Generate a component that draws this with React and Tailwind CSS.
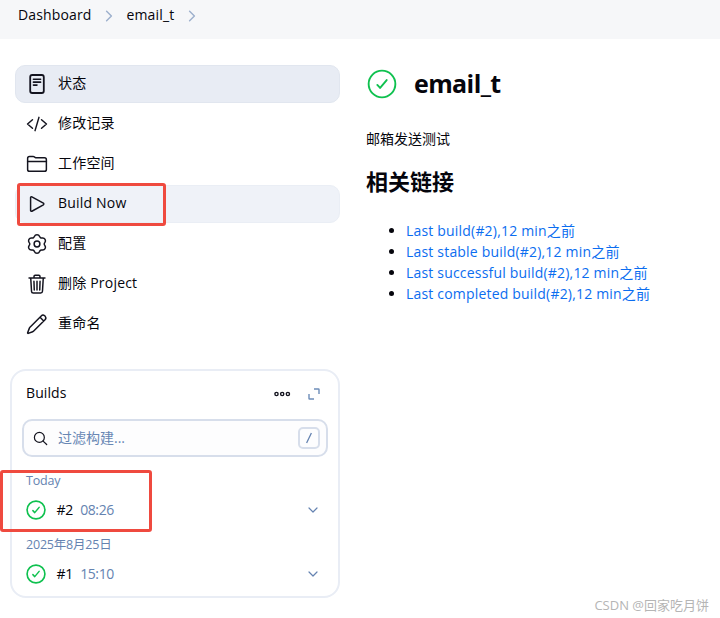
import React from 'react';

const CheckCircle = ({ className, ring, tick }) => (
  <svg viewBox="0 0 512 512" fill="none" stroke="#0fc14f" strokeLinecap="round" strokeLinejoin="round" className={className}>
    <circle cx="256" cy="256" r="228" strokeWidth={ring} />
    <path d="M336 189 L224 323 L176 272" strokeWidth={tick} />
  </svg>
);

const Icon = ({ children }) => (
  <svg viewBox="0 0 512 512" fill="none" stroke="#14141f" strokeWidth="38" strokeLinecap="round" strokeLinejoin="round" className="w-5 h-5 shrink-0 overflow-visible">
    {children}
  </svg>
);

const Chevron = ({ className, width }) => (
  <svg viewBox="0 0 10 10" fill="none" stroke="currentColor" strokeWidth={width} strokeLinecap="round" strokeLinejoin="round" className={className}>
    <path d="M3 1l4 4-4 4" />
  </svg>
);

const tasks = [
  {
    label: '状态',
    bg: 'bg-[#e8ecf4] border-[#e1e6ef]',
    icon: (
      <>
        <rect x="82" y="26" width="348" height="460" rx="52" strokeWidth="46" />
        <path d="M164 132h184M164 208h184M164 284h92" strokeWidth="40" />
      </>
    ),
  },
  {
    label: '修改记录',
    bg: 'border-transparent',
    icon: <path d="M140 366L14 256l126-110M372 366l126-110-126-110M306 86l-100 340" />,
  },
  {
    label: '工作空间',
    bg: 'border-transparent',
    icon: (
      <>
        <path d="M448 442H64a48 48 0 01-48-48V112a48 48 0 0148-48h96a48 48 0 0127 8l27 18a48 48 0 0027 8h207a48 48 0 0148 48v248a48 48 0 01-48 48z" />
        <path d="M16 194h480" />
      </>
    ),
  },
  {
    label: 'Build Now',
    bg: 'bg-[#eff2f8] border-[#eaeef5]',
    icon: <path d="M92 91v330c0 17 18 28 33 20l294-165c15-9 15-31 0-40L125 71c-15-8-33 3-33 20z" />,
  },
  {
    label: '配置',
    bg: 'border-transparent',
    icon: (
      <>
        <circle cx="256" cy="256" r="74" />
        {/* six-lobed cog */}
        <path d="M189.3 62.2A72 72 0 01322.7 62.2A55 55 0 00390.5 101.3A72 72 0 01457.2 216.9A55 55 0 00457.2 295.1A72 72 0 01390.5 410.7A55 55 0 00322.7 449.8A72 72 0 01189.3 449.8A55 55 0 00121.5 410.7A72 72 0 0154.8 295.1A55 55 0 0054.8 216.9A72 72 0 01121.5 101.3A55 55 0 00189.3 62.2z" />
      </>
    ),
  },
  {
    label: '删除 Project',
    bg: 'border-transparent',
    icon: (
      <path d="M96 112l20 332c1 26 20 44 44 44h192c24 0 43-18 44-44l20-332M52 104h408M180 104V60c0-16 12-28 28-28h96c16 0 28 12 28 28v44M256 184v224M178 184l8 224M334 184l-8 224" />
    ),
  },
  {
    label: '重命名',
    bg: 'border-transparent',
    icon: (
      <path d="M364 50L76 340c-8 8-12 16-17 28L16 480c-3 10 6 19 16 16l112-43c11-4 20-9 28-17L462 148c24-24 28-58 4-88l-14-14c-28-24-62-22-88 4zM334 84l94 94" />
    ),
  },
];

const builds = [
  { day: 'Today', id: '#2', time: '08:26' },
  { day: '2025年8月25日', id: '#1', time: '15:10' },
];

const links = ['Last build(#2),12 min', 'Last stable build(#2),12 min', 'Last successful build(#2),12 min', 'Last completed build(#2),12 min'];

const Header = () => (
  <header className="h-[39px] bg-[#f6f7f9] pl-[18px] pb-[9px] flex items-center tracking-[0.14px]">
    <span>Dashboard</span>
    <Chevron width="1.2" className="w-3 h-3 mt-0.5 ml-[11px] text-[#9db0cd]" />
    <span className="ml-3">email_t</span>
    <Chevron width="1.2" className="w-3 h-3 mt-0.5 ml-[12px] text-[#9db0cd]" />
  </header>
);

const Tasks = () => (
  <nav className="ml-[5px] flex flex-col gap-0.5">
    {tasks.map((task) => (
      <div key={task.label} className={`relative h-[38px] rounded-[10px] border pl-[11px] flex items-center gap-[11px] ${task.bg}`}>
        <Icon>{task.icon}</Icon>
        <span className="pb-0.5 tracking-[0.2px]">{task.label}</span>
        {task.label === 'Build Now' && (
          <div className="absolute -top-[3px] left-px w-[149px] h-[43px] border-3 border-[#ef4a3f] rounded-[3px]" />
        )}
      </div>
    ))}
  </nav>
);

const Builds = () => (
  <section className="relative mt-[26px] h-[229px] border-2 border-[#e9edf5] rounded-2xl px-[10px]">
    <div className="h-12 pl-1 pr-2 flex items-center">
      <span className="flex-1 pb-1 tracking-[0.1px]">Builds</span>
      <svg viewBox="0 0 18 6" fill="none" stroke="#14141f" strokeWidth="1.4" className="w-[18px] h-[6px] mb-0.5">
        <circle cx="3.5" cy="3" r="1.6" />
        <circle cx="9.2" cy="3" r="1.6" />
        <circle cx="14.9" cy="3" r="1.6" />
      </svg>
      <svg viewBox="0 0 12 12" fill="none" stroke="#6d8db9" strokeWidth="1.4" className="w-3 h-3 ml-[17px] mb-0.5">
        <path d="M6 1h4.4q.6 0 .6.6V6M1 6v4.4q0 .6.6.6H6" />
      </svg>
    </div>
    <div className="h-[38px] border-2 border-[#d7deeb] bg-[#fdfdfe] rounded-[10px] pl-[9px] pr-[6px] flex items-center">
      <svg viewBox="0 0 16 16" fill="none" stroke="#14141f" strokeWidth="1.3" strokeLinecap="round" className="w-[15px] h-[15px]">
        <circle cx="6.8" cy="6.8" r="5.3" />
        <path d="M10.8 10.8L14.6 14.4" />
      </svg>
      <span className="flex-1 ml-[10px] text-[#6887b4]">过滤构建...</span>
      <kbd className="w-[22px] h-[22px] border-2 border-[#d7deeb] rounded-[5px] flex items-center justify-center">
        <svg viewBox="0 0 8 12" stroke="#6583b1" strokeWidth="1.3" className="w-2 h-3">
          <path d="M6.4 1L1.6 11" />
        </svg>
      </kbd>
    </div>
    {builds.map((build) => (
      <div key={build.id} className="h-16 pt-[15px] pl-[4px] pr-[10px]">
        <div className="text-[12.5px] leading-[18px] tracking-[-0.2px] text-[#6583b1]">{build.day}</div>
        <div className="mt-[10px] h-5 flex items-center">
          <CheckCircle className="w-5 h-5" ring="42" tick="38" />
          <span className="ml-[10.5px] tracking-[-0.2px]">{build.id}</span>
          <span className="ml-[7px] flex-1 tracking-[-0.4px] text-[#6583b1]">{build.time}</span>
          <Chevron width="1.2" className="w-[10px] h-[10px] rotate-90 text-[#6583b1]" />
        </div>
      </div>
    ))}
    <div className="absolute top-[99px] -left-3 w-[152px] h-[62px] border-3 border-[#ef4a3f] rounded-[3px]" />
  </section>
);

const App = () => (
  <div className="relative w-[720px] h-[618px] overflow-hidden bg-white text-[#05050c] text-[14px] leading-5 font-['Open_Sans','Noto_Sans_CJK_SC',sans-serif]">
    <Header />
    <div className="flex">
      <aside className="w-[330px] ml-[10px] pt-[26px]">
        <Tasks />
        <Builds />
      </aside>
      <main className="ml-[26px] pt-[30px]">
        <h1 className="h-[30px] flex items-center gap-4 text-[25px] leading-[30px] font-bold">
          <CheckCircle className="w-8 h-[30px]" ring="32" tick="32" />
          <span className="pb-[3px] tracking-[-0.6px]">email_t</span>
        </h1>
        <p className="mt-[30px]">邮箱发送测试</p>
        <h2 className="mt-[17px] text-[22px] leading-[30px] font-bold">相关链接</h2>
        <ul className="mt-6 pl-10 list-disc leading-[21px]">
          {links.map((link) => (
            <li key={link}>
              <a href="#" className="text-[#0b6df0] tracking-[0.19px]">{link}之前</a>
            </li>
          ))}
        </ul>
      </main>
    </div>
    <footer className="absolute right-[11px] bottom-[3px] text-[13px] text-[#b5b5b5]">CSDN @回家吃月饼</footer>
  </div>
);

export default App;
